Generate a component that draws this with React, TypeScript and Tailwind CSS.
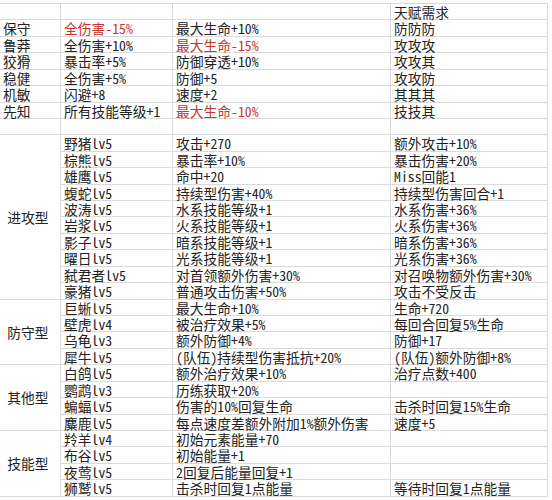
const RED = "text-[#c8352e]";

type Row = [string, string, string, string?];

// trait rows: name, effect1, effect2, talent requirement, which effect is red
const traits: { name: string; a: string; b: string; req: string; red?: "a" | "b" }[] = [
  { name: "保守", a: "全伤害-15%", b: "最大生命+10%", req: "防防防", red: "a" },
  { name: "鲁莽", a: "全伤害+10%", b: "最大生命-15%", req: "攻攻攻", red: "b" },
  { name: "狡猾", a: "暴击率+5%", b: "防御穿透+10%", req: "攻攻其" },
  { name: "稳健", a: "全伤害+5%", b: "防御+5", req: "攻攻防" },
  { name: "机敏", a: "闪避+8", b: "速度+2", req: "其其其" },
  { name: "先知", a: "所有技能等级+1", b: "最大生命-10%", req: "技技其", red: "b" },
];

const groups: { label: string; rows: Row[] }[] = [
  {
    label: "进攻型",
    rows: [
      ["野猪lv5", "攻击+270", "额外攻击+10%"],
      ["棕熊lv5", "暴击率+10%", "暴击伤害+20%"],
      ["雄鹰lv5", "命中+20", "Miss回能1"],
      ["蝮蛇lv5", "持续型伤害+40%", "持续型伤害回合+1"],
      ["波涛lv5", "水系技能等级+1", "水系伤害+36%"],
      ["岩浆lv5", "火系技能等级+1", "火系伤害+36%"],
      ["影子lv5", "暗系技能等级+1", "暗系伤害+36%"],
      ["曜日lv5", "光系技能等级+1", "光系伤害+36%"],
      ["弑君者lv5", "对首领额外伤害+30%", "对召唤物额外伤害+30%"],
      ["豪猪lv5", "普通攻击伤害+50%", "攻击不受反击"],
    ],
  },
  {
    label: "防守型",
    rows: [
      ["巨蜥lv5", "最大生命+10%", "生命+720"],
      ["壁虎lv4", "被治疗效果+5%", "每回合回复5%生命"],
      ["乌龟lv3", "额外防御+4%", "防御+17"],
      ["犀牛lv5", "(队伍)持续型伤害抵抗+20%", "(队伍)额外防御+8%"],
    ],
  },
  {
    label: "其他型",
    rows: [
      ["白鸽lv5", "额外治疗效果+10%", "治疗点数+400"],
      ["鹦鹉lv3", "历练获取+20%", ""],
      ["蝙蝠lv5", "伤害的10%回复生命", "击杀时回复15%生命"],
      ["麋鹿lv5", "每点速度差额外附加1%额外伤害", "速度+5"],
    ],
  },
  {
    label: "技能型",
    rows: [
      ["羚羊lv4", "初始元素能量+70", ""],
      ["布谷lv5", "初始能量+1", ""],
      ["夜莺lv5", "2回复后能量回复+1", ""],
      ["狮鹫lv5", "击杀时回复1点能量", "等待时回复1点能量"],
    ],
  },
];

const line = "border-r border-b border-[#dadada]";
const cell = `${line} h-[16.43px] pl-[3px] whitespace-nowrap shrink-0`;

const Cells = ({ b, c, d, redB, redC }: { b: string; c: string; d: string; redB?: boolean; redC?: boolean }) => (
  <>
    <div className={`${cell} w-[112px] ${redB ? RED : ""}`}>{b}</div>
    <div className={`${cell} w-[218px] ${redC ? RED : ""}`}>{c}</div>
    <div className={`${cell} w-[157px]`}>{d}</div>
  </>
);

export default function App() {
  return (
    <div
      className="w-[552px] h-[500px] bg-white pt-[3px] overflow-hidden text-[#222] text-[13.75px] leading-[16.43px]"
      style={{ fontFamily: '"Noto Sans Mono CJK SC", "Noto Sans CJK SC", "Liberation Sans", sans-serif' }}
    >
      <div className="w-[548px] flex flex-col border-t border-[#dadada]">
        {/* header row */}
        <div className="flex">
          <div className={`${cell} w-[61px]`} />
          <Cells b="" c="" d="天赋需求" />
        </div>

        {traits.map((t) => (
          <div key={t.name} className="flex">
            <div className={`${cell} w-[61px] pl-[1px]`}>{t.name}</div>
            <Cells b={t.a} c={t.b} d={t.req} redB={t.red === "a"} redC={t.red === "b"} />
          </div>
        ))}

        {/* blank spacer row */}
        <div className="flex">
          <div className={`${cell} w-[61px]`} />
          <Cells b="" c="" d="" />
        </div>

        {groups.map((g) => (
          <div key={g.label} className="flex">
            <div className={`${line} w-[61px] shrink-0 flex items-center justify-center pr-[4px]`}>{g.label}</div>
            <div className="flex flex-col">
              {g.rows.map((r) => (
                <div key={r[0]} className="flex">
                  <Cells b={r[0]} c={r[1]} d={r[2]} />
                </div>
              ))}
            </div>
          </div>
        ))}
      </div>
    </div>
  );
}
